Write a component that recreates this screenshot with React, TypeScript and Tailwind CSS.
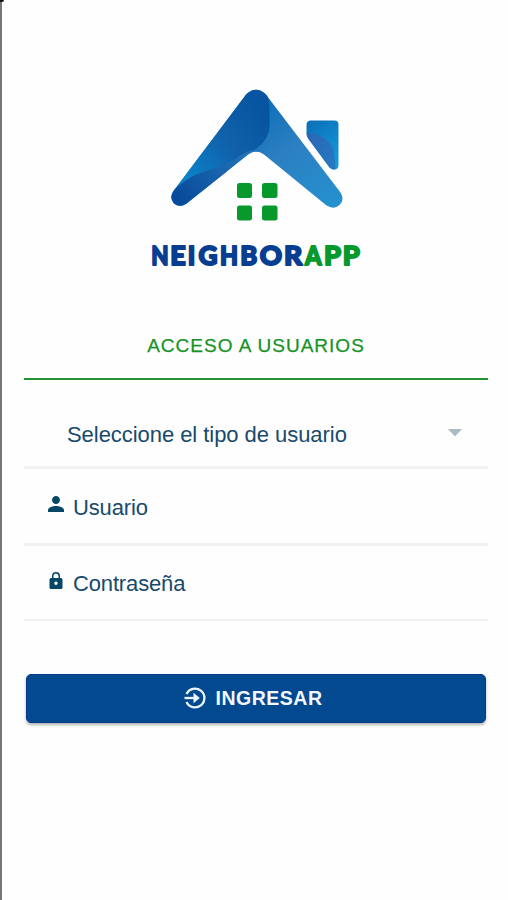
import React from 'react';

interface FieldProps {
    label: string;
    icon: React.ReactNode;
    className: string;
}

// x position and advance of each letter of the wordmark
const wordmark = [
    { char: 'N', x: 151.3, width: 17.3, color: '#073e91' },
    { char: 'E', x: 170.2, width: 15.5, color: '#073e91' },
    { char: 'I', x: 187.8, width: 7.5, color: '#073e91' },
    { char: 'G', x: 198.5, width: 19, color: '#073e91' },
    { char: 'H', x: 220, width: 18, color: '#073e91' },
    { char: 'B', x: 240.3, width: 17, color: '#073e91' },
    { char: 'O', x: 259.7, width: 22.3, color: '#073e91' },
    { char: 'R', x: 284, width: 18.3, color: '#073e91' },
    { char: 'A', x: 305, width: 16.5, color: '#07992b' },
    { char: 'P', x: 324, width: 17, color: '#07992b' },
    { char: 'P', x: 342.8, width: 17, color: '#07992b' },
];

const Logo: React.FC = () => (
    <svg viewBox="140 80 230 200" className="w-[230px] h-[200px]">
        <defs>
            <linearGradient id="roof" gradientUnits="userSpaceOnUse" x1="265" y1="110" x2="335" y2="205">
                <stop offset="0" stopColor="#1471b8" />
                <stop offset="0.4" stopColor="#2c80c2" />
                <stop offset="1" stopColor="#2590ce" />
            </linearGradient>
            <linearGradient id="slope" gradientUnits="userSpaceOnUse" x1="268" y1="120" x2="188" y2="180">
                <stop offset="0" stopColor="#0755a0" />
                <stop offset="0.45" stopColor="#1060aa" />
                <stop offset="1" stopColor="#0c82c8" />
            </linearGradient>
            <linearGradient id="foot" gradientUnits="userSpaceOnUse" x1="178" y1="200" x2="246" y2="152">
                <stop offset="0" stopColor="#084a9b" />
                <stop offset="1" stopColor="#2274b8" />
            </linearGradient>
            <linearGradient id="chimney" gradientUnits="userSpaceOnUse" x1="308" y1="120" x2="338" y2="165">
                <stop offset="0" stopColor="#0c6fb8" />
                <stop offset="1" stopColor="#149bdc" />
            </linearGradient>
            <linearGradient id="chimneyShade" gradientUnits="userSpaceOnUse" x1="308" y1="135" x2="336" y2="168">
                <stop offset="0" stopColor="#2a67b5" />
                <stop offset="1" stopColor="#247bc2" />
            </linearGradient>
            <clipPath id="roofShape">
                <path d="M246.500 94Q256 85.500 265.500 94L340.500 192.500Q345 200 339.500 205Q334 210 326.500 205.500L264 154.500Q256 148.500 248 154.500L186.500 203.500Q180 208 174 203.500Q169 198 173.500 191Z" />
            </clipPath>
            <clipPath id="chimneyShape">
                <path d="M311 120.500H334.500Q338.500 120.500 338.500 124.500V165Q338.500 169.500 334 169.500Q331.500 169.500 329.500 167.500L308.500 139Q306.500 136.500 306.500 133V125Q306.500 120.500 311 120.500Z" />
            </clipPath>
        </defs>
        <g clipPath="url(#roofShape)">
            <path d="M165 80H350V215H165Z" fill="url(#roof)" />
            <path d="M165 215V80H260Q269 92 269.500 108V126Q269 140 256 149Q245 155 238 160L200 200Z" fill="url(#slope)" />
            <path d="M165 200Q182 178 206 171Q229 165 241 155Q251 149 259 150L255 160L205 212H165Z" fill="url(#foot)" />
        </g>
        <g clipPath="url(#chimneyShape)">
            <path d="M305 119H340V171H305Z" fill="url(#chimney)" />
            <path d="M305 133Q326 133 333 149Q335 155 335.500 171H305Z" fill="url(#chimneyShade)" />
        </g>
        <g fill="#07992b">
            <rect x="237" y="183" width="15" height="15" rx="2.500" />
            <rect x="262" y="183" width="15.500" height="15" rx="2.500" />
            <rect x="237" y="205.500" width="15" height="15" rx="2.500" />
            <rect x="262" y="205.500" width="15.500" height="15" rx="2.500" />
        </g>
        <text y="265" className="font-[Lato] font-black" fontSize="27" strokeWidth="1.900" strokeLinejoin="round">
            {wordmark.map((letter, index) => (
                <tspan
                    key={index}
                    x={letter.x}
                    textLength={letter.width}
                    lengthAdjust="spacingAndGlyphs"
                    fill={letter.color}
                    stroke={letter.color}
                >
                    {letter.char}
                </tspan>
            ))}
        </text>
    </svg>
);

const UserIcon = () => (
    <svg viewBox="4 4 16 16" className="w-4 h-4" fill="#064766">
        <path d="M12 12c2.210 0 4-1.790 4-4s-1.790-4-4-4-4 1.790-4 4 1.790 4 4 4zm0 2c-2.670 0-8 1.340-8 4v2h16v-2c0-2.660-5.330-4-8-4z" />
    </svg>
);

const LockIcon = () => (
    <svg viewBox="0 0 14 19" className="w-3.5 h-[19px] -mt-px" fill="#064766">
        <path
            fillRule="evenodd"
            d="M2 7H3V5a4 4 0 0 1 8 0V7H12a1.500 1.500 0 0 1 1.500 1.500V16.500A1.500 1.500 0 0 1 12 18H2A1.500 1.500 0 0 1 .5 16.500V8.500A1.500 1.500 0 0 1 2 7ZM4.500 7h5V5a2.500 2.500 0 0 0-5 0ZM7 10.500a1.700 1.700 0 1 0 0 3.400a1.700 1.700 0 0 0 0-3.400Z"
        />
    </svg>
);

const EnterIcon = () => (
    <svg viewBox="0 0 24 24" className="w-6 h-6" fill="none" stroke="#eef5ff" strokeWidth="2.300">
        <path d="M3.500 8A9.400 9.400 0 1 1 3.500 16" />
        <path d="M1.500 12H13" />
        <path d="M10.500 6.800L16.800 12L10.500 17.200Z" fill="#eef5ff" stroke="none" />
    </svg>
);

const Field: React.FC<FieldProps> = ({ label, icon, className }) => (
    <div className={`flex items-start pl-6 border-[#f0f1f2] ${className}`}>
        <span className="w-4 flex justify-center">{icon}</span>
        <span className="ml-[9px] text-[22px] leading-6 tracking-[-0.15px]">{label}</span>
    </div>
);

const App: React.FC = () => {
    return (
        <div className="h-[900px] w-full bg-[#fefefe] font-['Liberation_Sans',sans-serif] text-[#174a6c] overflow-hidden">
            <div className="relative h-full border-l-2 border-[#777779] pl-[22px] pr-5">
                <div className="absolute -left-0.5 top-0 w-1 h-0.5 bg-[#111] rounded-br-sm" />
                <div className="pt-20 pl-[116px]">
                    <Logo />
                </div>

                <h1 className="h-[100px] pt-[54px] text-center text-[19px] leading-6 tracking-[1px] text-[#159324] [-webkit-text-stroke:0.25px_#159324] border-b-2 border-[#269432]">
                    ACCESO A USUARIOS
                </h1>

                <div className="flex items-start justify-between h-[89px] pt-[43px] pl-[43px] pr-[26px] border-b-[3px] border-[#f0f1f2]">
                    <span className="text-[22px] leading-6 tracking-[-0.05px]">Seleccione el tipo de usuario</span>
                    <svg viewBox="0 0 14 8" className="w-3.5 h-2 mt-1.5">
                        <path d="M0 0H14L7 7.500Z" fill="#a9bcc4" />
                    </svg>
                </div>
                <Field label="Usuario" icon={<UserIcon />} className="h-[77px] pt-[27px] border-b-[3px]" />
                <Field
                    label="Contraseña"
                    icon={<LockIcon />}
                    className="h-[75px] pt-[26px] border-b-2"
                />

                <button className="mt-[53px] ml-0.5 w-[460px] h-[49px] flex items-center justify-center gap-[9px] rounded-[5px] bg-[#034990] border border-[#073d86] shadow-[0_2px_3px_rgba(0,0,0,0.3)] text-[#f3f7ff] pb-px pr-[7px]">
                    <EnterIcon />
                    <span className="text-[19.500px] leading-6 font-bold tracking-[0.5px]">INGRESAR</span>
                </button>
            </div>
        </div>
    );
};

export default App;
